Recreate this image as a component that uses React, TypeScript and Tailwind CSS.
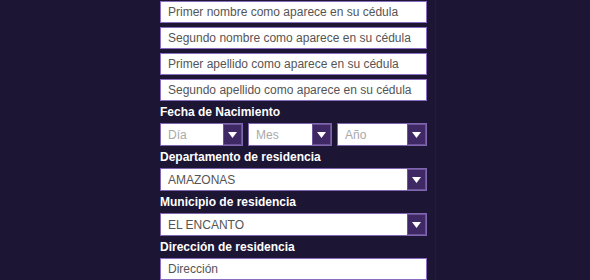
const textInputs = [
  'Primer nombre como aparece en su cédula',
  'Segundo nombre como aparece en su cédula',
  'Primer apellido como aparece en su cédula',
  'Segundo apellido como aparece en su cédula',
]

function Caret() {
  return (
    <span className="flex h-full w-[19px] flex-none items-center justify-center border border-[#6c5396] bg-[#3e2964]">
      <svg width="9" height="6" viewBox="0 0 9 6">
        <path d="M0 0h9L4.5 6z" fill="#ffffff" />
      </svg>
    </span>
  )
}

function SelectBox({
  value,
  placeholder,
  className,
}: {
  value?: string
  placeholder?: string
  className?: string
}) {
  return (
    <div
      className={`flex h-[23px] items-stretch border border-[#7f64b0] bg-white ${className ?? ''}`}
    >
      <span
        className={`flex flex-1 items-center pl-[7px] text-[12px] ${value ? 'text-[#555555]' : 'text-[#a9a9a9]'}`}
      >
        {value ?? placeholder}
      </span>
      <Caret />
    </div>
  )
}

function Label({ children }: { children: string }) {
  return (
    <div className="flex h-[22px] items-center text-[12px] font-bold leading-none text-white">
      {children}
    </div>
  )
}

export default function App() {
  return (
    <div
      className="h-[280px] w-[590px] overflow-hidden bg-[#1c1533]"
      style={{ fontFamily: '"Liberation Sans", Arial, sans-serif' }}
    >
      <div className="ml-[160px] h-full w-[276px] border-r border-[#221c3b] pr-[8px] pt-[1px]">
        <div className="flex flex-col gap-[4px]">
          {textInputs.map((t) => (
            <div
              key={t}
              className="flex h-[22px] items-center border border-[#8a6cc0] bg-white pl-[7px] text-[12px] text-[#555555]"
            >
              {t}
            </div>
          ))}
        </div>
        <Label>Fecha de Nacimiento</Label>
        <div className="flex gap-[5px]">
          <SelectBox placeholder="Día" className="w-[83px]" />
          <SelectBox placeholder="Mes" className="w-[84px]" />
          <SelectBox placeholder="Año" className="flex-1" />
        </div>
        <Label>Departamento de residencia</Label>
        <SelectBox value="AMAZONAS" />
        <Label>Municipio de residencia</Label>
        <SelectBox value="EL ENCANTO" />
        <Label>Dirección de residencia</Label>
        <div className="flex h-[22px] items-center border border-[#8a6cc0] bg-white pl-[7px] text-[12px] text-[#555555]">
          Dirección
        </div>
      </div>
    </div>
  )
}
